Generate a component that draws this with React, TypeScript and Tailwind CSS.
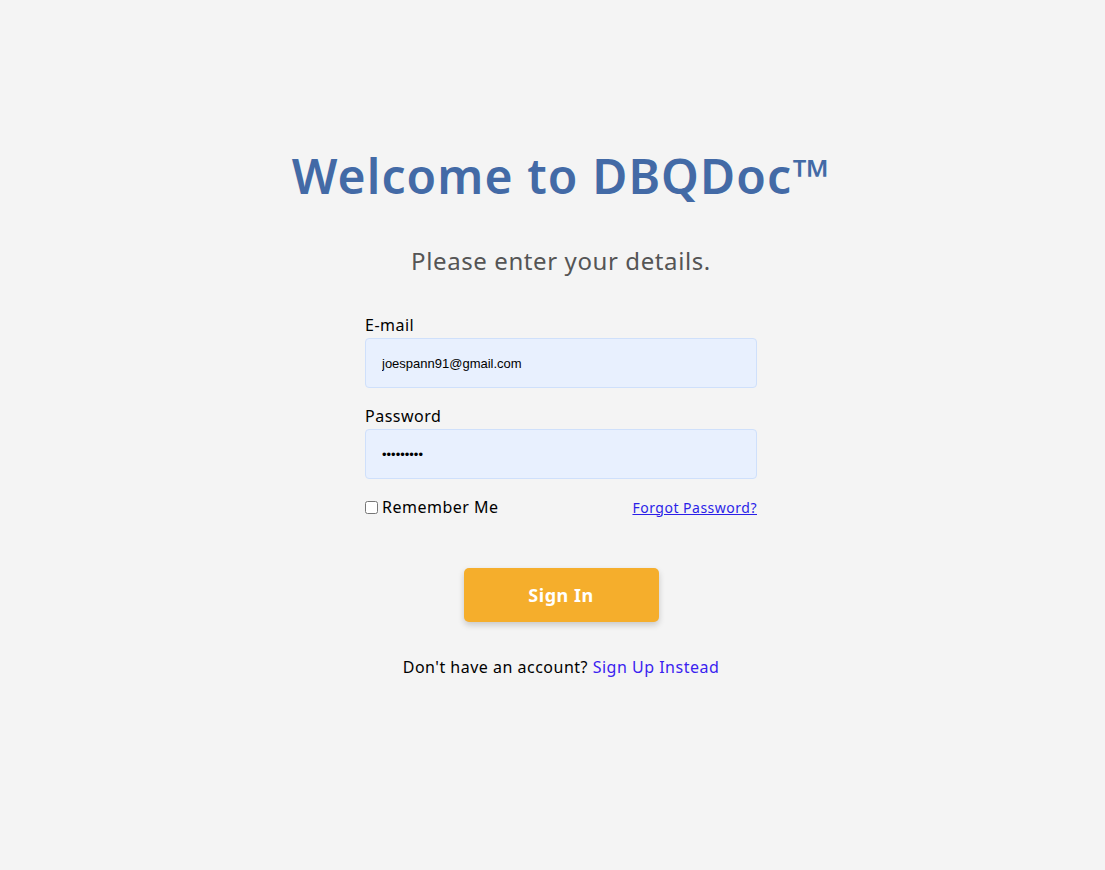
import React from "react";

const App = () => {
  return (
    <div className="min-h-[870px] w-full bg-[#f4f4f4] font-['Noto_Sans',sans-serif] tracking-[0.5px]">
      <div className="flex flex-col items-center pl-[17px] pt-[140px]">
        <h1 className="text-[48px] font-semibold leading-[72px] text-[#436aa6] tracking-[1.1px]">
          Welcome to DBQDoc™
        </h1>
        <p className="mt-[31px] text-[24px] leading-[36px] text-[#555555] tracking-[0.6px]">
          Please enter your details.
        </p>

        {/* ------------------------form------------------------ */}
        <form action="" className="mt-[34px] flex w-[392px] flex-col">
          <label className="mb-[1px] text-[16px] leading-[24px] text-black" htmlFor="email">
            E-mail
          </label>
          <input
            id="email"
            type="email"
            defaultValue="joespann91@gmail.com"
            className="h-[50px] rounded-[4px] border border-[#cfe0fb] bg-[#e8f0fe] px-[16px] pt-[1px] font-['Liberation_Sans',sans-serif] text-[13px] tracking-normal text-black outline-none"
          />
          <label className="mb-[1px] mt-[16px] text-[16px] leading-[24px] text-black" htmlFor="password">
            Password
          </label>
          <input
            id="password"
            type="password"
            defaultValue="123456789"
            className="h-[50px] rounded-[4px] border border-[#cfe0fb] bg-[#e8f0fe] px-[16px] pt-[1px] font-['Liberation_Sans',sans-serif] text-[13px] tracking-normal text-black outline-none"
          />
          <div className="mt-[16px] flex items-center justify-between">
            <div className="flex items-center">
              <input type="checkbox" id="remember" className="m-0 h-[13px] w-[13px]" />
              <label className="ml-[4px] text-[16px] leading-[24px] text-black" htmlFor="remember">
                Remember Me
              </label>
            </div>
            <a href="#" className="text-[14px] leading-[21px] text-[#2b1fe8] underline">
              Forgot Password?
            </a>
          </div>
          <div className="mt-[49px] flex justify-center">
            <button
              type="button"
              className="h-[54px] w-[195px] rounded-[5px] bg-[#f5ae2c] text-[18px] font-bold text-white shadow-[0_3px_6px_rgba(0,0,0,0.18)]"
            >
              Sign In
            </button>
          </div>
          <p className="mt-[33px] text-center text-[16px] leading-[24px] text-black">
            Don't have an account? <a href="#" className="text-[#3a22f0]">Sign Up Instead</a>
          </p>
        </form>
      </div>
    </div>
  );
};

export default App;
